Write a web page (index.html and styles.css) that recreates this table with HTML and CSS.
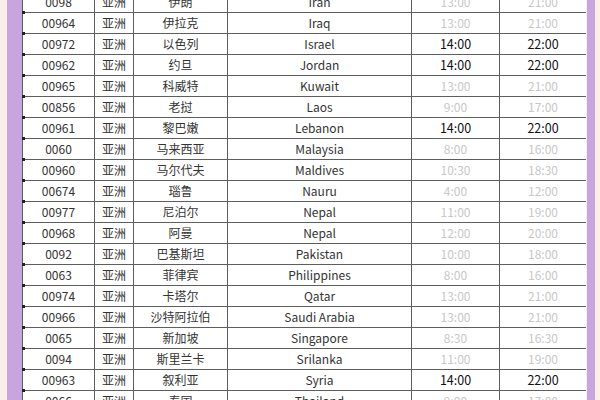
FILE: index.html
```html
<!DOCTYPE html>
<html lang="zh-CN">
<head>
<meta charset="utf-8">
<link rel="stylesheet" href="styles.css">
</head>
<body>
<div class="page">
  <div class="edge edge-l"></div>
  <div class="band band-l"></div>
  <div class="sheet">
    <table class="grid">
      <colgroup>
        <col class="c-code"><col class="c-area"><col class="c-cn"><col class="c-en"><col class="c-t1"><col class="c-t2">
      </colgroup>
      <tbody>
        <tr><td>0098</td><td>亚洲</td><td>伊朗</td><td>Iran</td><td class="m">13:00</td><td class="m">21:00</td></tr>
        <tr><td>00964</td><td>亚洲</td><td>伊拉克</td><td>Iraq</td><td class="m">13:00</td><td class="m">21:00</td></tr>
        <tr><td>00972</td><td>亚洲</td><td>以色列</td><td>Israel</td><td class="b">14:00</td><td class="b">22:00</td></tr>
        <tr><td>00962</td><td>亚洲</td><td>约旦</td><td>Jordan</td><td class="b">14:00</td><td class="b">22:00</td></tr>
        <tr><td>00965</td><td>亚洲</td><td>科威特</td><td>Kuwait</td><td class="m">13:00</td><td class="m">21:00</td></tr>
        <tr><td>00856</td><td>亚洲</td><td>老挝</td><td>Laos</td><td class="m">9:00</td><td class="m">17:00</td></tr>
        <tr><td>00961</td><td>亚洲</td><td>黎巴嫩</td><td>Lebanon</td><td class="b">14:00</td><td class="b">22:00</td></tr>
        <tr><td>0060</td><td>亚洲</td><td>马来西亚</td><td>Malaysia</td><td class="m">8:00</td><td class="m">16:00</td></tr>
        <tr><td>00960</td><td>亚洲</td><td>马尔代夫</td><td>Maldives</td><td class="m">10:30</td><td class="m">18:30</td></tr>
        <tr><td>00674</td><td>亚洲</td><td>瑙鲁</td><td>Nauru</td><td class="m">4:00</td><td class="m">12:00</td></tr>
        <tr><td>00977</td><td>亚洲</td><td>尼泊尔</td><td>Nepal</td><td class="m">11:00</td><td class="m">19:00</td></tr>
        <tr><td>00968</td><td>亚洲</td><td>阿曼</td><td>Nepal</td><td class="m">12:00</td><td class="m">20:00</td></tr>
        <tr><td>0092</td><td>亚洲</td><td>巴基斯坦</td><td>Pakistan</td><td class="m">10:00</td><td class="m">18:00</td></tr>
        <tr><td>0063</td><td>亚洲</td><td>菲律宾</td><td>Philippines</td><td class="m">8:00</td><td class="m">16:00</td></tr>
        <tr><td>00974</td><td>亚洲</td><td>卡塔尔</td><td>Qatar</td><td class="m">13:00</td><td class="m">21:00</td></tr>
        <tr><td>00966</td><td>亚洲</td><td>沙特阿拉伯</td><td>Saudi Arabia</td><td class="m">13:00</td><td class="m">21:00</td></tr>
        <tr><td>0065</td><td>亚洲</td><td>新加坡</td><td>Singapore</td><td class="m">8:30</td><td class="m">16:30</td></tr>
        <tr><td>0094</td><td>亚洲</td><td>斯里兰卡</td><td>Srilanka</td><td class="m">11:00</td><td class="m">19:00</td></tr>
        <tr><td>00963</td><td>亚洲</td><td>叙利亚</td><td>Syria</td><td class="b">14:00</td><td class="b">22:00</td></tr>
        <tr><td>0066</td><td>亚洲</td><td>泰国</td><td>Thailand</td><td class="m">9:00</td><td class="m">17:00</td></tr>
      </tbody>
    </table>
  </div>
  <div class="band band-r"></div>
  <div class="edge edge-r"></div>
</div>
</body>
</html>
```
FILE: styles.css
```css
html, body {
  margin: 0;
  padding: 0;
  background: #fbefe9;
}
.page {
  display: flex;
  width: 600px;
  height: 400px;
  overflow: hidden;
}
.edge-l { width: 7px; flex: none; background: #fbefe9; }
.band-l { width: 15px; flex: none; background: #c9a5df; }
.band-r { width: 8px; flex: none; background: #c9a5df; margin-left: 1px; }
.edge-r { flex: 1; background: #fbefe9; }
.sheet {
  width: 564px;
  flex: none;
  background: #fff;
  overflow: hidden;
}
.grid {
  margin-top: -9px;
  border-collapse: collapse;
  table-layout: fixed;
  width: 564px;
  font-family: "Noto Sans CJK SC", "Noto Sans", sans-serif;
  font-size: 12px;
  color: #333;
}
.c-code { width: 72px; }
.c-area { width: 39px; }
.c-cn { width: 94px; }
.c-en { width: 184px; }
.c-t1 { width: 88px; }
.c-t2 { width: 87px; }
.grid td {
  border: 1px solid #5e5e5e;
  height: 20px;
  padding: 0;
  line-height: 20px;
  text-align: center;
  white-space: nowrap;
  overflow: hidden;
}
.grid td:first-child {
  position: relative;
  overflow: visible;
}
.grid td:first-child::after {
  content: "";
  position: absolute;
  left: -1px;
  bottom: -2px;
  width: 3px;
  height: 3px;
  background: #222;
}
.grid td.m { color: #c8c8c8; }
.grid td.b { color: #111; font-weight: 400; font-size: 12.5px; }
```
